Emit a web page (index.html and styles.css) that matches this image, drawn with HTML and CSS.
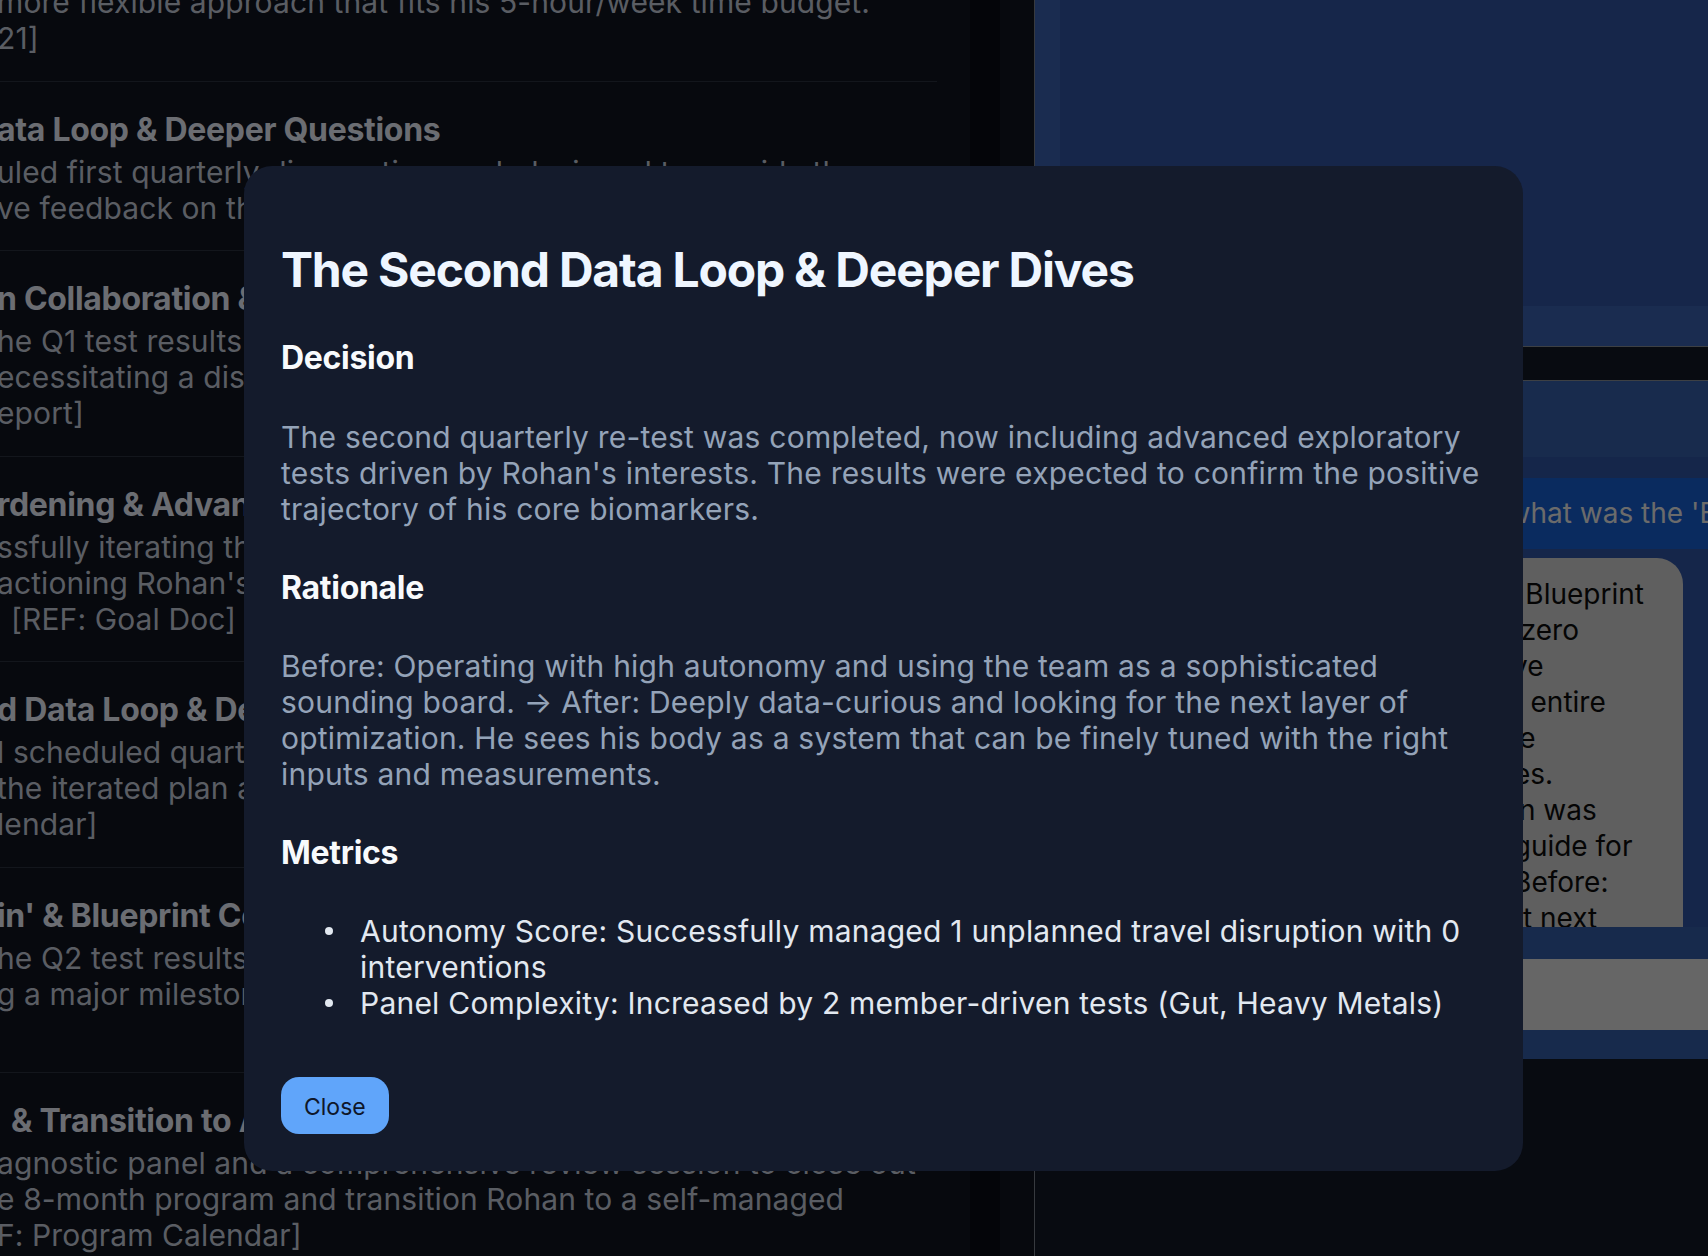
FILE: index.html
```html
<!DOCTYPE html>
<html lang="en">
<head>
<meta charset="utf-8">
<title>The Second Data Loop &amp; Deeper Dives</title>
<link rel="stylesheet" href="styles.css">
</head>
<body>
<div class="app">
  <aside class="journey">
    <div class="journey-scroll">
      <ul class="timeline">
        <li class="step step-partial">
          <p class="step-desc"><span>more flexible approach that fits his 5-hour/week time budget.</span><span>21]</span></p>
        </li>
        <li class="step">
          <h4 class="step-title">ata Loop &amp; Deeper Questions</h4>
          <p class="step-desc"><span>uled first quarterly diagnostic panel, designed to provide the</span><span>ve feedback on the member's initial adherence and progress.</span></p>
        </li>
        <li class="step">
          <h4 class="step-title">n Collaboration &amp; Plan Iteration</h4>
          <p class="step-desc"><span>he Q1 test results revealed a mixed picture on adherence,</span><span>ecessitating a discussion on barriers and plan changes. [REF:</span><span>eport]</span></p>
        </li>
        <li class="step">
          <h4 class="step-title">rdening &amp; Advanced Optimization</h4>
          <p class="step-desc"><span>ssfully iterating the plan, the team focused on hardening</span><span>actioning Rohan's new interest in advanced performance goals.</span><span class="indent">[REF: Goal Doc]</span></p>
        </li>
        <li class="step">
          <h4 class="step-title">d Data Loop &amp; Deeper Dives</h4>
          <p class="step-desc"><span>l scheduled quarterly re-test was designed to validate</span><span>the iterated plan and explore new areas of optimization. [REF:</span><span>lendar]</span></p>
        </li>
        <li class="step">
          <h4 class="step-title">in' &amp; Blueprint Consolidation</h4>
          <p class="step-desc"><span>he Q2 test results confirmed sustained improvements, marking</span><span>g a major milestone in Rohan's health journey.</span><span>&nbsp;</span></p>
        </li>
        <li class="step">
          <h4 class="step-title indent">&amp; Transition to Autonomy</h4>
          <p class="step-desc"><span>agnostic panel and a comprehensive review session to close out</span><span>e 8-month program and transition Rohan to a self-managed</span><span>F: Program Calendar]</span></p>
        </li>
      </ul>
    </div>
    <div class="scrollbar"></div>
  </aside>

  <section class="side">
    <div class="summary-wrap">
      <div class="summary-card"></div>
    </div>
    <div class="chat">
      <div class="chat-header"></div>
      <div class="chat-messages">
        <div class="msg-user">Looking back on the program, what was the 'Blueprint' and why did it matter?</div>
        <div class="msg-bot">
          <span>Based on your Q2 results – its Blueprint</span>
          <span>was confirmed after reaching zero</span>
          <span>interventions and clear, positive</span>
          <span>trend in biomarkers across his entire</span>
          <span>program. It marked a milestone</span>
          <span>for Rohan's health, and routines.</span>
          <span>From that point on, the full plan was</span>
          <span>no longer a rulebook, but the guide for</span>
          <span>his own, everyday decisions. Before:</span>
          <span>After: today, searching out that next</span>
          <span>layer of optimization.</span>
        </div>
      </div>
      <div class="chat-footer">
        <div class="chat-input"></div>
      </div>
    </div>
  </section>
</div>

<div class="backdrop"></div>

<div class="modal" role="dialog" aria-labelledby="modal-title">
  <h2 class="modal-title" id="modal-title">The Second Data Loop &amp; Deeper Dives</h2>
  <h3 class="modal-heading first">Decision</h3>
  <p class="modal-text lead">The second quarterly re-test was completed, now including advanced exploratory tests driven by Rohan's interests. The results were expected to confirm the positive trajectory of his core biomarkers.</p>
  <h3 class="modal-heading after-lead">Rationale</h3>
  <p class="modal-text tight">Before: Operating with high autonomy and using the team as a sophisticated sounding board. → After: Deeply data-curious and looking for the next layer of optimization. He sees his body as a system that can be finely tuned with the right inputs and measurements.</p>
  <h3 class="modal-heading">Metrics</h3>
  <ul class="metrics">
    <li>Autonomy Score: Successfully managed 1 unplanned travel disruption with 0 interventions</li>
    <li>Panel Complexity: Increased by 2 member-driven tests (Gut, Heavy Metals)</li>
  </ul>
  <button class="close-btn" type="button">Close</button>
</div>
</body>
</html>
```

FILE: styles.css
```css
* { box-sizing: border-box; }

html, body {
  margin: 0;
  padding: 0;
}

body {
  width: 1708px;
  height: 1256px;
  overflow: hidden;
  background: #101622;
  font-family: Inter, "Noto Sans", "Liberation Sans", sans-serif;
}

.app {
  display: flex;
  height: 1256px;
}

/* ---------- left journey column ---------- */
.journey {
  width: 1035px;
  flex: none;
  display: flex;
  background: #0e121c;
  border-right: 1px solid #6e747e;
  overflow: hidden;
}

.journey-scroll {
  width: 937px;
  flex: none;
  overflow: hidden;
}

.timeline {
  list-style: none;
  margin: -16px 0 0 -3px;
  padding: 0;
}

.step {
  padding: 28px 0 24.5px;
  border-bottom: 1px solid #262c38;
}

.step-partial { padding-top: 0; }

.step-title {
  margin: 0 0 4px;
  font-size: 32px;
  font-weight: 700;
  line-height: 40px;
  letter-spacing: -0.3px;
  color: #d6dbe4;
  white-space: nowrap;
}

.step-desc {
  margin: 0;
  font-size: 30px;
  line-height: 36px;
  letter-spacing: 0.1px;
  color: #b4bac6;
}

.step-desc span {
  display: block;
  white-space: nowrap;
}

.indent { padding-left: 14px; }

.scrollbar {
  width: 30px;
  flex: none;
  margin-left: 33px;
  background: #080a12;
}

/* ---------- right side ---------- */
.side {
  flex: 1;
  min-width: 0;
  display: flex;
  flex-direction: column;
}

.summary-wrap {
  height: 347px;
  padding: 0 0 40px 25px;
  background: #3458a0;
  border-bottom: 1px solid #7a8088;
}

.summary-card {
  height: 306px;
  background: #2c4c94;
}

.chat {
  margin-top: 33px;
  border-top: 1px solid #7a8088;
  display: flex;
  flex-direction: column;
}

.chat-header {
  height: 76px;
  background: #30569a;
}

.chat-messages {
  height: 470px;
  overflow: hidden;
  padding-top: 21px;
  background: #2a4c94;
}

.msg-user {
  margin-left: 44px;
  height: 71px;
  padding: 17px 24px;
  background: #1456be;
  color: #d6d6d6;
  font-size: 28px;
  line-height: 36px;
  white-space: nowrap;
  overflow: hidden;
}

.msg-bot {
  margin: 9px 25px 0 65px;
  padding: 18px 33px 16px 24px;
  background: #bebebe;
  border-radius: 26px;
  color: #0a0a0a;
  font-size: 28px;
  line-height: 36px;
}

.msg-bot span {
  display: block;
  white-space: nowrap;
}

.chat-footer {
  height: 132px;
  padding: 32px 0 0 25px;
  background: #2e5498;
}

.chat-input {
  height: 71px;
  background: #cccccc;
}

/* ---------- modal ---------- */
.backdrop {
  position: fixed;
  inset: 0;
  background: rgba(0, 0, 0, 0.5);
}

.modal {
  position: absolute;
  left: 244px;
  top: 166px;
  width: 1279px;
  padding: 36px 37px 37px;
  background: #141b2c;
  border-radius: 28px;
}

.modal-title {
  margin: 39px 0 0;
  font-size: 48px;
  font-weight: 700;
  line-height: 58px;
  letter-spacing: -1.2px;
  color: #eff6ff;
}

.modal-heading {
  margin: 42px 0 0;
  font-size: 32px;
  font-weight: 700;
  line-height: 38px;
  letter-spacing: -0.3px;
  color: #f8fafc;
}

.modal-heading.first { margin-top: 40px; }

.modal-text {
  margin: 42px 0 0;
  font-size: 30px;
  line-height: 36px;
  letter-spacing: 0.22px;
  color: #94a3b8;
}

.modal-text.tight { margin-top: 41px; }

.metrics {
  margin: 41px 0 0;
  padding-left: 79px;
  list-style: none;
  font-size: 30px;
  line-height: 36px;
  letter-spacing: 0.22px;
  color: #e2e8f0;
}

.metrics li {
  position: relative;
}

.metrics li::before {
  content: "";
  position: absolute;
  left: -35px;
  top: 14px;
  width: 8px;
  height: 8px;
  border-radius: 50%;
  background: currentColor;
}

.close-btn {
  display: block;
  margin-top: 56px;
  padding: 16px 23px 12px;
  border: 0;
  border-radius: 18px;
  background: #60a5fa;
  color: #0f172a;
  font-family: Inter, "Noto Sans", sans-serif;
  font-size: 23px;
  line-height: 29px;
}
```
